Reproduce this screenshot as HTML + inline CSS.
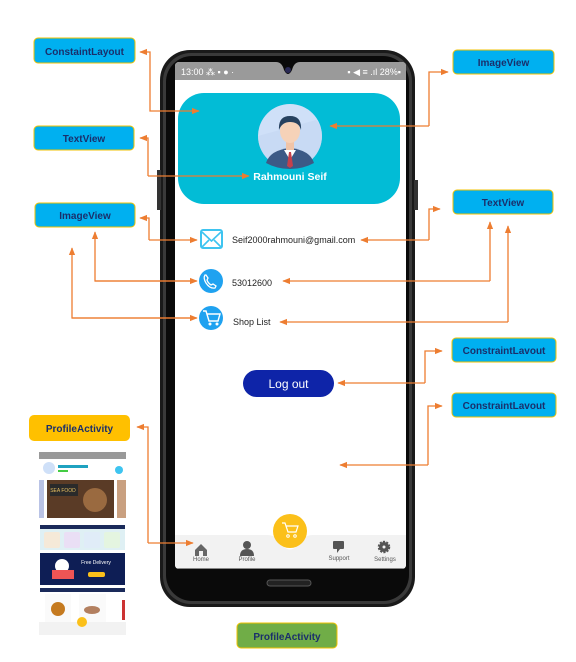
<!DOCTYPE html>
<html><head><meta charset="utf-8"><style>
body{margin:0;width:576px;height:657px;background:#fff;overflow:hidden;font-family:"Liberation Sans",sans-serif}
</style></head><body>
<svg width="576" height="657" viewBox="0 0 576 657" xmlns="http://www.w3.org/2000/svg" font-family="Liberation Sans, sans-serif">
<defs>
<marker id="a" viewBox="0 0 10 10" refX="9" refY="5" markerWidth="6" markerHeight="6" orient="auto-start-reverse"><path d="M0,1 L10,5 L0,9 z" fill="#ED7D31"/></marker>
<clipPath id="scr"><rect x="175" y="62" width="231" height="507" rx="4"/></clipPath>
</defs>
<!-- phone -->
<rect x="160" y="50" width="255" height="557" rx="30" fill="#1a1a1a"/>
<rect x="163" y="53" width="249" height="551" rx="28" fill="#3a3a3a"/>
<rect x="166" y="56" width="243" height="545" rx="26" fill="#0a0a0a"/>
<rect x="157" y="170" width="4" height="40" fill="#333"/>
<rect x="414" y="180" width="4" height="30" fill="#333"/>
<g clip-path="url(#scr)">
<rect x="175" y="62" width="231" height="507" fill="#fff"/>
<rect x="175" y="62" width="231" height="18" fill="#9a9a9a"/>
<text x="181" y="75" font-size="9" fill="#fff">13:00 ⁂ ▪ ● ·</text>
<text x="401" y="75" font-size="9" fill="#fff" text-anchor="end">▪ ◀ ≡ .ıl 28%▪</text>
<path d="M276,62 Q282,62 284,70 Q288,78 292,70 Q294,62 300,62 z" fill="#0a0a0a"/>
<circle cx="288" cy="70" r="3" fill="#2a2a55"/>
<rect x="178" y="93" width="222" height="111" rx="26" fill="#02BCD6"/>
<circle cx="290" cy="136" r="32" fill="#CFE0F8"/>
<path d="M258,136 a32,32 0 0 0 64,0 c0,-6 -2,-12 -6,-16 z" fill="#C3D6F2" opacity=".6"/>
<path d="M266,163 Q270,150 290,148 Q310,150 314,163 Q303,169 290,169 Q277,169 266,163z" fill="#3C5A86"/>
<path d="M284,150 L290,160 L296,150z" fill="#fff"/>
<path d="M289,152 L291,152 L293,166 L290,168 L287,166z" fill="#C5404B"/>
<rect x="286" y="140" width="8" height="10" fill="#F0C4A8"/>
<ellipse cx="290" cy="131" rx="10" ry="12" fill="#F6D2B8"/>
<path d="M279,130 Q278,116 290,116 Q302,116 301,130 Q299,122 290,122 Q282,122 279,130z" fill="#26415F"/>
<text x="290" y="180" font-size="10.5" font-weight="bold" fill="#fff" text-anchor="middle">Rahmouni Seif</text>
<rect x="201" y="230" width="21" height="18" rx="2" fill="none" stroke="#3EC4F0" stroke-width="2"/>
<path d="M202,232 L211.5,241 L221,232 M202,247 L209,240 M221,247 L214,240" fill="none" stroke="#3EC4F0" stroke-width="1.6"/>
<text x="232" y="243" font-size="9" fill="#222">Seif2000rahmouni@gmail.com</text>
<circle cx="211" cy="281" r="12" fill="#1FA2F0"/>
<path d="M205,275 q-2,3 1,8 q4,6 9,5 l1,-2 -3,-2 -2,1 q-3,-2 -4,-5 l1,-2 -2,-3z" fill="none" stroke="#fff" stroke-width="1.3"/>
<text x="232" y="286" font-size="9" fill="#222">53012600</text>
<circle cx="211" cy="318" r="12" fill="#1FA2F0"/>
<path d="M203,311 h3 l3,10 h9 l2,-7 h-13" fill="none" stroke="#fff" stroke-width="1.4"/>
<circle cx="210" cy="324" r="1.5" fill="#fff"/><circle cx="217" cy="324" r="1.5" fill="#fff"/>
<text x="233" y="325" font-size="9" fill="#222">Shop List</text>
<rect x="243" y="370" width="91" height="27" rx="13.5" fill="#0E24A8"/>
<text x="288.5" y="388" font-size="12" fill="#fff" text-anchor="middle">Log out</text>
<path d="M175,535 H267 Q278,535 283,546 Q290,553 297,546 Q302,535 313,535 H406 V569 H175z" fill="#f2f2f2"/>
<rect x="175" y="568" width="231" height="2" fill="#888"/>
<circle cx="290" cy="531" r="17" fill="#FBC01A"/>
<path d="M282,523 h3 l3,9 h8 l2,-6 h-12" fill="none" stroke="#fff" stroke-width="1.2"/>
<circle cx="288" cy="536" r="1.3" fill="none" stroke="#fff"/><circle cx="295" cy="536" r="1.3" fill="none" stroke="#fff"/>
<path d="M195,550 L201,544 L207,550 V556 H195z" fill="#666"/><rect x="199" y="551" width="4" height="5" fill="#f2f2f2"/>
<text x="201" y="561" font-size="6" fill="#555" text-anchor="middle">Home</text>
<circle cx="247" cy="545" r="4" fill="#555"/><path d="M240,556 q0,-7 7,-7 q7,0 7,7z" fill="#555"/>
<text x="247" y="561" font-size="6" fill="#555" text-anchor="middle">Profile</text>
<rect x="333" y="541" width="11" height="8" rx="1" fill="#555"/><path d="M337,549 v4 l3,-4" fill="#555"/>
<text x="339" y="560" font-size="6" fill="#555" text-anchor="middle">Support</text>
<circle cx="384" cy="547" r="5" fill="#555" stroke="#555" stroke-width="2.5" stroke-dasharray="2 1.2"/><circle cx="384" cy="547" r="1.5" fill="#f2f2f2"/>
<text x="385" y="561" font-size="6" fill="#555" text-anchor="middle">Settings</text>
</g>
<rect x="267" y="580" width="44" height="6" rx="3" fill="#222" stroke="#555" stroke-width="1"/>
<!-- labels -->
<g font-size="10" font-weight="bold" fill="#1A2F6B" text-anchor="middle">
<rect x="34" y="38" width="101" height="25" rx="4" fill="#00B0F0" stroke="#F2C200"/><text x="84.5" y="55">ConstaintLayout</text>
<rect x="34" y="126" width="100" height="24" rx="4" fill="#00B0F0" stroke="#F2C200"/><text x="84" y="142">TextView</text>
<rect x="35" y="203" width="100" height="24" rx="4" fill="#00B0F0" stroke="#F2C200"/><text x="85" y="219">ImageView</text>
<rect x="453" y="50" width="101" height="24" rx="4" fill="#00B0F0" stroke="#F2C200"/><text x="503.5" y="66">ImageView</text>
<rect x="453" y="190" width="100" height="24" rx="4" fill="#00B0F0" stroke="#F2C200"/><text x="503" y="206">TextView</text>
<rect x="452" y="338" width="104" height="24" rx="4" fill="#00B0F0" stroke="#F2C200"/><text x="504" y="354">ConstraintLavout</text>
<rect x="452" y="393" width="104" height="24" rx="4" fill="#00B0F0" stroke="#F2C200"/><text x="504" y="409">ConstraintLavout</text>
<rect x="29" y="415" width="101" height="26" rx="5" fill="#FFC000"/><text x="79.5" y="432">ProfileActivity</text>
<rect x="237" y="623" width="100" height="25" rx="4" fill="#70AD47" stroke="#F2C200"/><text x="287" y="640">ProfileActivity</text>
</g>
<!-- thumbnail -->
<rect x="39" y="452" width="87" height="183" fill="#fff"/>
<rect x="39" y="452" width="87" height="7" fill="#999"/>
<circle cx="49" cy="468" r="6" fill="#CFE0F8"/>
<rect x="58" y="465" width="30" height="3" fill="#1FA2C0"/><rect x="58" y="470" width="10" height="2" fill="#4c4"/>
<circle cx="119" cy="470" r="4" fill="#3EC4F0"/>
<rect x="39" y="480" width="5" height="38" fill="#b9c3e6"/>
<rect x="47" y="480" width="67" height="38" fill="#5a3b26"/>
<rect x="50" y="484" width="28" height="12" fill="#2a2a2a"/><text x="63" y="492" font-size="5" fill="#e8c060" text-anchor="middle">SEA FOOD</text>
<circle cx="95" cy="500" r="12" fill="#9a6a40"/>
<rect x="117" y="480" width="9" height="38" fill="#c9a080"/>
<rect x="40" y="525" width="85" height="4" fill="#1a2a5a"/>
<rect x="40" y="529" width="85" height="21" fill="#dff0f4"/>
<rect x="44" y="532" width="16" height="16" rx="2" fill="#f5e9d8"/><rect x="64" y="532" width="16" height="16" rx="2" fill="#eadff5"/><rect x="84" y="532" width="16" height="16" rx="2" fill="#e0ecf8"/><rect x="104" y="532" width="16" height="16" rx="2" fill="#e4f5e0"/>
<rect x="40" y="553" width="85" height="32" fill="#0e1e55"/>
<circle cx="62" cy="566" r="7" fill="#fff"/><rect x="52" y="570" width="22" height="9" fill="#e55"/>
<text x="96" y="564" font-size="5" fill="#fff" text-anchor="middle">Free Delivery</text>
<rect x="88" y="572" width="17" height="5" rx="2" fill="#FBC01A"/>
<rect x="40" y="588" width="85" height="4" fill="#1a2a5a"/>
<rect x="45" y="594" width="26" height="28" fill="#fafafa"/><circle cx="58" cy="609" r="7" fill="#c57a20"/>
<rect x="79" y="594" width="27" height="28" fill="#fafafa"/><ellipse cx="92" cy="610" rx="8" ry="4" fill="#b38060"/>
<rect x="122" y="600" width="3" height="20" fill="#c33"/>
<rect x="39" y="622" width="87" height="13" fill="#f2f2f2"/>
<circle cx="82" cy="622" r="5" fill="#FBC01A"/>
<!-- arrows -->
<g fill="none" stroke="#ED7D31" stroke-width="1.3">
<path d="M198,111 H150 V52 H140" marker-end="url(#a)"/>
<path d="M197,111 H199" marker-end="url(#a)"/>
<path d="M148,176 V138 H140" marker-end="url(#a)"/>
<path d="M148,176 H249" marker-end="url(#a)"/>
<path d="M149,240 V218 H140" marker-end="url(#a)"/>
<path d="M149,240 H197" marker-end="url(#a)"/>
<path d="M196,281 H95 V232" marker-end="url(#a)"/>
<path d="M95,281 H197" marker-end="url(#a)"/>
<path d="M196,318 H72 V248" marker-end="url(#a)"/>
<path d="M72,318 H197" marker-end="url(#a)"/>
<path d="M429,126 V72 H448" marker-end="url(#a)"/>
<path d="M429,126 H330" marker-end="url(#a)"/>
<path d="M429,240 V209 H440" marker-end="url(#a)"/>
<path d="M429,240 H361" marker-end="url(#a)"/>
<path d="M490,281 V222" marker-end="url(#a)"/>
<path d="M490,281 H283" marker-end="url(#a)"/>
<path d="M508,322 V226" marker-end="url(#a)"/>
<path d="M508,322 H280" marker-end="url(#a)"/>
<path d="M425,383 V351 H442" marker-end="url(#a)"/>
<path d="M425,383 H338" marker-end="url(#a)"/>
<path d="M428,465 V406 H442" marker-end="url(#a)"/>
<path d="M428,465 H340" marker-end="url(#a)"/>
<path d="M148,543 V427 H137" marker-end="url(#a)"/>
<path d="M148,543 H193" marker-end="url(#a)"/>
</g>
</svg>
</body></html>
